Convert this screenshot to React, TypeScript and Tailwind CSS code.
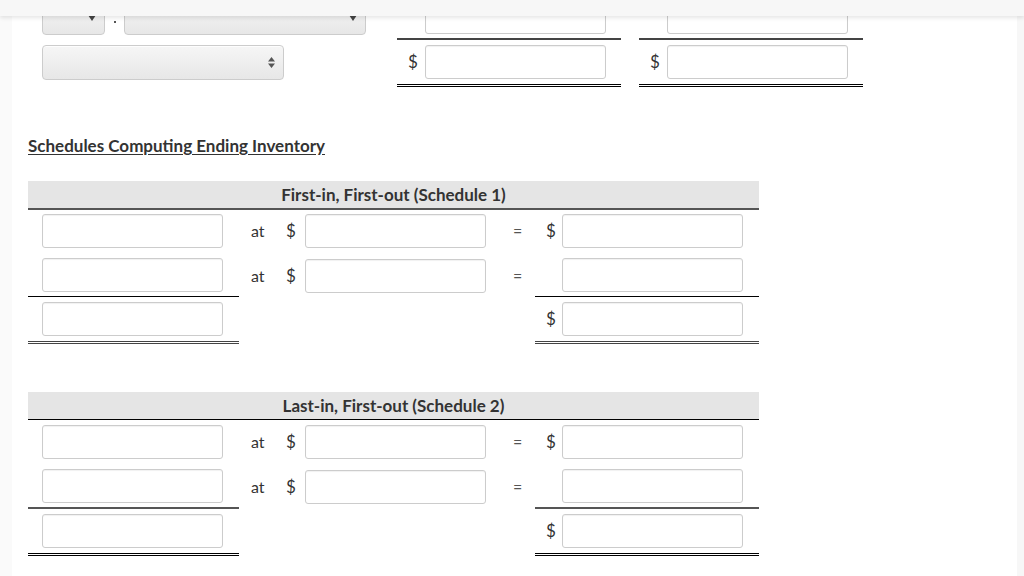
import React from "react";

const inputCls =
  "h-[34px] w-[181px] rounded-[3px] border border-[#cccccc] bg-white shadow-[inset_0_1px_1px_rgba(0,0,0,0.06)]";

function Box() {
  return <div className={inputCls} />;
}

function Caret() {
  return (
    <svg width="8" height="6" viewBox="0 0 8 6" className="text-[#444]">
      <path d="M0 0h8L4 6z" fill="currentColor" />
    </svg>
  );
}

function UpDown() {
  return (
    <svg width="7" height="11" viewBox="0 0 7 11" className="text-[#555]">
      <path d="M0 4.5h7L3.5 0z M0 6.5h7L3.5 11z" fill="currentColor" />
    </svg>
  );
}

const selectCls =
  "flex items-center justify-end rounded-[4px] border border-[#cccccc] bg-gradient-to-b from-[#f6f6f6] to-[#e7e7e7] shadow-[inset_0_1px_0_rgba(255,255,255,0.8)] pr-[8px]";

function TopCol({ className }: { className?: string }) {
  return (
    <div className={"w-[224px] " + (className ?? "")}>
      <div className="flex h-[40px] items-start pl-[28px] border-b-2 border-[#444]">
        <Box />
      </div>
      <div className="flex items-center pt-[5px] pb-[5px] border-b-[3px] border-double border-black">
        <span className="w-[28px] pl-[11px] text-[17px] text-[#333]">$</span>
        <Box />
      </div>
    </div>
  );
}

type RowProps = {
  at?: boolean;
  eq?: boolean;
  dollarRight?: boolean;
  border?: string;
  pt: string;
  pb: string;
};

function Row({ at, eq, dollarRight, border = "", pt, pb }: RowProps) {
  return (
    <div className="flex">
      <div className={`w-[211px] pl-[14px] ${pt} ${pb} ${border}`}>
        <Box />
      </div>
      <div className={`flex w-[247px] items-center ${pt} ${pb}`}>
        {at ? (
          <>
            <span className="w-[36px] pl-[12px] text-[16px] text-[#333]">at</span>
            <span className="w-[30px] pl-[11px] text-[17px] text-[#333]">$</span>
            <Box />
          </>
        ) : null}
      </div>
      <div className={`flex w-[49px] items-center pl-[27px] ${pt} ${pb}`}>
        {eq ? <span className="text-[16px] text-[#555]">=</span> : null}
      </div>
      <div className={`flex w-[224px] items-center ${pt} ${pb} ${border}`}>
        <span className="w-[27px] pl-[11px] text-[17px] text-[#333]">
          {dollarRight ? "$" : ""}
        </span>
        <Box />
      </div>
    </div>
  );
}

export default function App() {
  return (
    <div className="relative h-[576px] w-[1024px] overflow-hidden bg-white font-['Lato','Noto_Sans',sans-serif] text-[#333]">
      <div className="absolute left-0 top-0 z-10 h-[16px] w-full bg-[#f7f7f7] shadow-[0_2px_4px_rgba(0,0,0,0.1)]" />
      <div className="flex h-full">
        <div className="w-[12px] bg-[#fafafa]" />
        <div className="flex-1 pl-[16px]">
          {/* top partial section */}
          <div className="flex">
            <div className="w-[338px] pl-[14px]">
              <div className="flex items-end">
                <div className={selectCls + " h-[35px] w-[63px]"}>
                  <Caret />
                </div>
                <div className="flex w-[19px] justify-center pb-[12px]">
                  <span className="h-[2px] w-[2px] bg-[#555]" />
                </div>
                <div className={selectCls + " h-[35px] w-[242px]"}>
                  <Caret />
                </div>
              </div>
              <div className={selectCls + " mt-[10px] h-[35px] w-[242px]"}>
                <UpDown />
              </div>
            </div>
            <TopCol className="ml-[31px]" />
            <TopCol className="ml-[18px]" />
          </div>

          <div className="mt-[48px] text-[17px] font-bold leading-[22px] underline underline-offset-2">
            Schedules Computing Ending Inventory
          </div>

          {/* FIFO */}
          <div className="mt-[24px] w-[731px]">
            <div className="flex h-[29px] items-center justify-center border-b-2 border-[#555] bg-[#e5e5e5] text-[17px] font-bold">
              First-in, First-out (Schedule 1)
            </div>
            <Row at eq dollarRight pt="pt-[4px]" pb="pb-[5px]" />
            <Row at eq pt="pt-[5px]" pb="pb-[4px]" border="border-b border-black" />
            <Row dollarRight pt="pt-[5px]" pb="pb-[5px]" border="border-b-[3px] border-double border-[#444]" />
          </div>

          {/* LIFO */}
          <div className="mt-[48px] w-[731px]">
            <div className="flex h-[28px] items-center justify-center border-b border-black bg-[#e5e5e5] text-[17px] font-bold">
              Last-in, First-out (Schedule 2)
            </div>
            <Row at eq dollarRight pt="pt-[5px]" pb="pb-[5px]" />
            <Row at eq pt="pt-[5px]" pb="pb-[4px]" border="border-b-2 border-[#555]" />
            <Row dollarRight pt="pt-[5px]" pb="pb-[5px]" border="border-b-[3px] border-double border-black" />
          </div>
        </div>
        <div className="w-[7px] bg-[#f7f7f7]" />
      </div>
    </div>
  );
}
